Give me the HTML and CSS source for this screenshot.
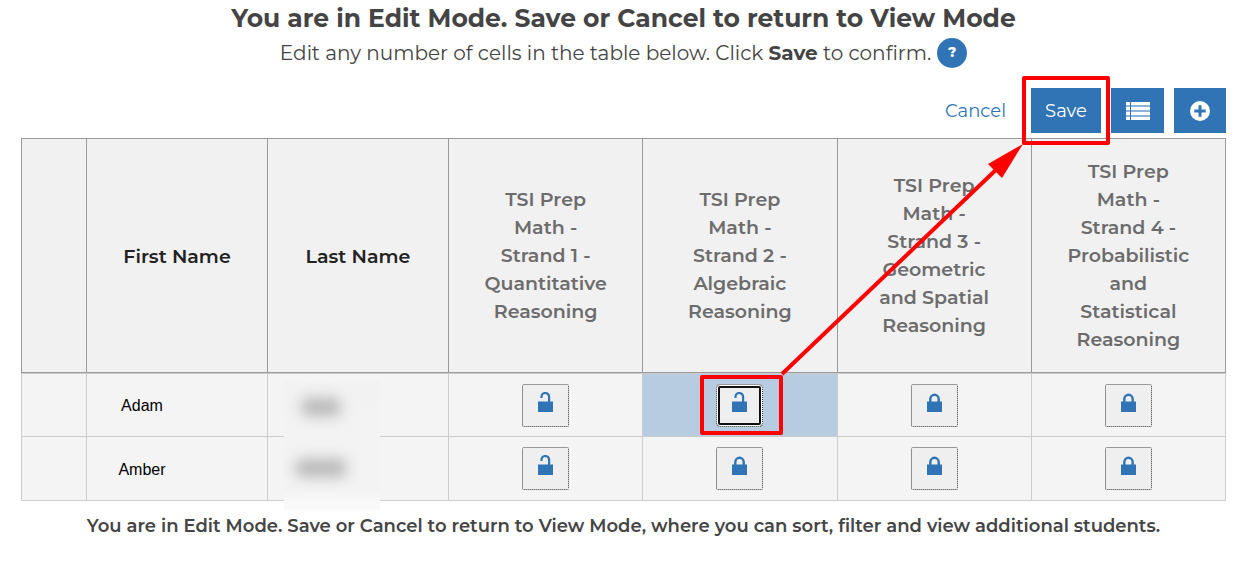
FILE: index.html
```html
<!DOCTYPE html>
<html lang="en">
<head>
<meta charset="utf-8">
<title>Edit Mode</title>
<link rel="stylesheet" href="styles.css">
</head>
<body>
<svg class="defs" width="0" height="0" aria-hidden="true">
  <symbol id="open" viewBox="0 0 15 20"><path d="M0 9.5h15V20H0z"/><path d="M3.5 6V4.8a3.7 3.7 0 0 1 7.6 0V10" fill="none" stroke="currentColor" stroke-width="2.2"/></symbol>
  <symbol id="closed" viewBox="0 0 15 20"><path d="M0 9.5h15V20H0z"/><path d="M3.3 10V7a4.2 4.2 0 0 1 8.4 0V10" fill="none" stroke="currentColor" stroke-width="2.4"/></symbol>
</svg>
<main class="page">
  <header class="intro">
    <h1 class="title">You are in Edit Mode. Save or Cancel to return to View Mode</h1>
    <div class="hint">
      <p class="hint-text">Edit any number of cells in the table below. Click <strong>Save</strong> to confirm.</p>
      <button class="help" type="button" aria-label="Help">?</button>
    </div>
  </header>
  <div class="toolbar">
    <a class="cancel" href="#">Cancel</a>
    <button class="btn" type="button">Save</button>
    <button class="btn list-btn" type="button" aria-label="List view">
      <svg width="24" height="18" viewBox="0 0 24 18"><path d="M0 0h4v18H0zM5 0h19v18H5z" fill="#8db4d8"/><path d="M0 0h4v3H0zM5 0h19v3H5zM0 5h4v3H0zM5 5h19v3H5zM0 10h4v3H0zM5 10h19v3H5zM0 15h4V18H0zM5 15h19V18H5z" fill="currentColor"/></svg>
    </button>
    <button class="btn add-btn" type="button" aria-label="Add">
      <svg width="20" height="20" viewBox="0 0 20 20"><circle cx="10" cy="10" r="10" fill="currentColor"/><path d="M10 4.3v11.4M4.3 10h11.4" stroke="#3074b5" stroke-width="3"/></svg>
    </button>
  </div>
  <table class="grid">
    <colgroup><col class="col-mark"><col class="col-name"><col class="col-name"><col><col><col><col></colgroup>
    <thead>
      <tr>
        <th></th>
        <th class="name-head">First Name</th>
        <th class="name-head">Last Name</th>
        <th>TSI Prep Math - Strand 1 - Quantitative Reasoning</th>
        <th>TSI Prep Math - Strand 2 - Algebraic Reasoning</th>
        <th>TSI Prep Math - Strand 3 - Geometric and Spatial Reasoning</th>
        <th>TSI Prep Math - Strand 4 - Probabilistic and Statistical Reasoning</th>
      </tr>
    </thead>
    <tbody>
      <tr class="first-row">
        <td></td>
        <td class="name">Adam</td>
        <td class="masked"><div class="mask"><span class="smudge"></span><span class="smudge smudge-wide"></span></div></td>
        <td><button class="lock" type="button" aria-label="Unlocked"><svg><use href="#open"/></svg></button></td>
        <td class="active"><button class="lock focused" type="button" aria-label="Unlocked"><svg><use href="#open"/></svg></button></td>
        <td><button class="lock" type="button" aria-label="Locked"><svg><use href="#closed"/></svg></button></td>
        <td><button class="lock" type="button" aria-label="Locked"><svg><use href="#closed"/></svg></button></td>
      </tr>
      <tr>
        <td></td>
        <td class="name">Amber</td>
        <td></td>
        <td><button class="lock" type="button" aria-label="Unlocked"><svg><use href="#open"/></svg></button></td>
        <td><button class="lock" type="button" aria-label="Locked"><svg><use href="#closed"/></svg></button></td>
        <td><button class="lock" type="button" aria-label="Locked"><svg><use href="#closed"/></svg></button></td>
        <td><button class="lock" type="button" aria-label="Locked"><svg><use href="#closed"/></svg></button></td>
      </tr>
    </tbody>
  </table>
  <p class="note">You are in Edit Mode. Save or Cancel to return to View Mode, where you can sort, filter and view additional students.</p>
  <svg class="callout" width="1252" height="562" viewBox="0 0 1252 562" aria-hidden="true">
    <g fill="none" stroke="#f00" stroke-width="4" stroke-linejoin="round">
      <rect x="1024" y="78" width="84" height="65"/>
      <rect x="702" y="377" width="79" height="56"/>
      <path d="M782 374L1000 166"/>
    </g>
    <path d="M1023 144L1002 178L988 164Z" fill="#f00"/>
  </svg>
</main>
</body>
</html>
```
FILE: styles.css
```css
* { box-sizing: border-box; }
body {
  margin: 0;
  background: #fff;
  color: #444;
  font-family: Montserrat, Inter, "Open Sans", sans-serif;
}
.defs { position: absolute; }
.page {
  position: relative;
  padding: 2px 26px 24px 21px;
}
.intro { text-align: center; }
.title {
  margin: 0;
  font-size: 25px;
  line-height: 32px;
  font-weight: 700;
}
.hint {
  display: flex;
  justify-content: center;
  align-items: center;
  gap: 6px;
  padding-top: 4px;
}
.hint-text {
  margin: 0;
  font-size: 20px;
  line-height: 30px;
  font-weight: 400;
}
.hint-text strong { font-weight: 700; }
.help {
  width: 30px;
  height: 30px;
  padding: 0 0 3px;
  border: 0;
  border-radius: 50%;
  background: #3074b5;
  color: #fff;
  font: 800 14px/20px Montserrat, Inter, sans-serif;
}
.toolbar {
  display: flex;
  justify-content: flex-end;
  align-items: center;
  gap: 10px;
  padding: 20px 0 5px;
}
.cancel {
  padding: 0 15px;
  color: #3074b5;
  font-size: 18px;
  font-weight: 400;
  text-decoration: none;
}
.btn {
  display: flex;
  justify-content: center;
  align-items: center;
  height: 45px;
  min-width: 70px;
  padding: 0 14px;
  border: 0;
  background: #3074b5;
  color: #fff;
  font: 400 18px/24px Montserrat, Inter, sans-serif;
}
.list-btn { min-width: 53px; }
.add-btn { min-width: 52px; }
.grid {
  width: 100%;
  table-layout: fixed;
  border-collapse: collapse;
}
.col-mark { width: 65px; }
.col-name { width: 181px; }
.grid th {
  height: 234px;
  padding: 0 34px;
  border: 1px solid #999;
  background: #f1f1f1;
  color: #6c6c6c;
  font-size: 19px;
  line-height: 28px;
  font-weight: 600;
}
.grid .name-head {
  padding: 2px 10px 0;
  color: #222;
}
.grid td {
  height: 64px;
  padding: 0;
  border: 1px solid #ccc;
  background: #f4f4f4;
  text-align: center;
}
.grid .first-row td {
  padding-top: 2px;
  box-shadow: inset 0 1px #ccc;
}
.grid .active { background: #b8cce1; }
.grid .name {
  padding: 2px 70px 0 0;
  color: #000;
  font: 16px/20px "Liberation Sans", Arial, sans-serif;
}
.grid .masked { position: relative; }
.mask {
  position: absolute;
  top: 8px;
  left: 16px;
  display: flex;
  flex-direction: column;
  gap: 43px;
  width: 96px;
  height: 129px;
  padding: 17px 10px;
  background: linear-gradient(#f2f2f2, #f3f3f3 85%, #f9f9f9 94%);
}
.smudge {
  width: 40px;
  height: 18px;
  margin-left: 7px;
  border-radius: 8px;
  background: #b8b8b8;
  filter: blur(7px);
}
.smudge-wide {
  width: 52px;
  margin-left: 1px;
}
.lock {
  display: inline-flex;
  justify-content: center;
  align-items: flex-start;
  width: 47px;
  height: 43px;
  padding: 7px 0 0;
  border: 1px dotted #333;
  border-top: 1px solid #999;
  border-radius: 2px;
  background: #efefef;
  color: #3074b5;
  vertical-align: middle;
}
.lock svg {
  width: 15px;
  height: 20px;
  fill: currentColor;
}
.focused {
  border-radius: 4px;
  box-shadow: inset 0 0 0 1px #fff, inset 0 0 0 3px #111;
}
.note {
  margin: 0;
  padding-top: 12px;
  font-size: 18px;
  line-height: 26px;
  font-weight: 600;
  text-align: center;
}
.callout {
  position: absolute;
  top: 0;
  right: 0;
  pointer-events: none;
}
```
